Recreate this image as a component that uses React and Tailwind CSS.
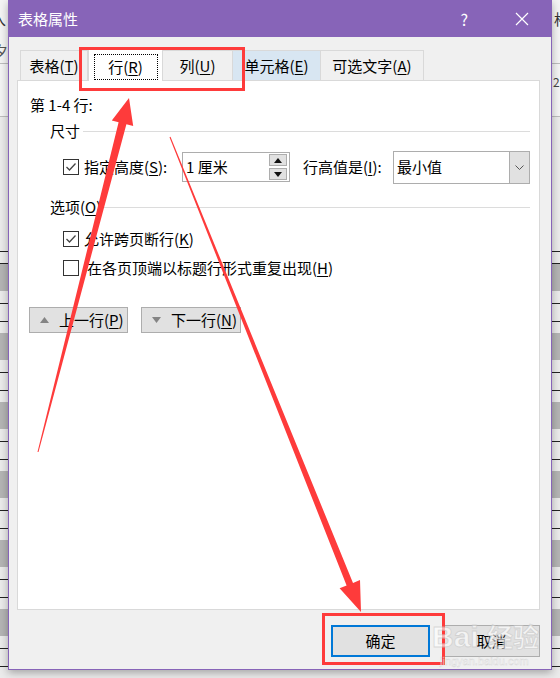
import React from 'react';

const font = "font-[family-name:'Noto_Sans_CJK_SC','Noto_Sans',sans-serif]";

function Stripes({ top }) {
  // fragments of the Word document behind the dialog
  const blocks = [0, 1, 2, 3, 4, 5];
  return (
    <div className="flex flex-col w-[8px] h-[678px] overflow-hidden bg-[#ececec]">
      <div className="h-[37px] bg-[#f4f4f4] overflow-hidden text-[15px] leading-[37px] text-[#333]">
        <span className={top === 'left' ? '-ml-[9px] inline-block' : 'ml-[2px] inline-block'}>{top === 'left' ? '入' : '格'}</span>
      </div>
      <div className="h-[33px] bg-[#f4f4f4] border-b border-[#bdbdbd] overflow-hidden text-[15px] leading-[33px] text-[#555]">
        {top === 'left' && <span className="-ml-[7px] inline-block">夕</span>}
      </div>
      <div className="h-[58px] bg-[#f4f4f4] border-b border-[#bdbdbd] overflow-hidden text-[12px] leading-[36px] text-[#444]">
        <span className={top === 'left' ? '-ml-[5px] inline-block' : 'ml-[1px] inline-block'}>{top === 'left' ? 'ı' : '2|'}</span>
      </div>
      <div className="h-[147px] bg-[#ebebeb] border-b border-[#222]" />
      <div className="h-[13px] bg-[#ebebeb] border-b border-[#222]" />
      {blocks.map((b) => (
        <div key={b} className="flex flex-col shrink-0">
          <div className="h-[27px] bg-[#b4b4b4]" />
          <div className="h-[12px] bg-[#ebebeb] border-b border-[#222] box-content" />
          <div className="h-[17px] bg-[#ebebeb] border-b border-[#222] box-content" />
          <div className="h-[11px] bg-[#ebebeb]" />
        </div>
      ))}
    </div>
  );
}

function Check({ checked }) {
  return (
    <span className="w-[16px] h-[16px] border border-[#333] bg-white flex items-center justify-center shrink-0">
      {checked && (
        <svg width="12" height="10" viewBox="0 0 12 10">
          <polyline points="1.5,5 4.5,8 10.5,1.5" fill="none" stroke="#444" strokeWidth="1.3" />
        </svg>
      )}
    </span>
  );
}

function Tab({ label, mn, w, active, hover, first }) {
  if (active) {
    return (
      <div className={`${w} h-[33px] -mb-px bg-white border-x border-t border-[#d9d9d9] flex items-center justify-center relative z-10`}>
        <div className="w-[64px] h-[26px] mt-[3px] border border-dotted border-black flex items-center justify-center">
          <span>{label}(<u className="underline-offset-2">{mn}</u>)</span>
        </div>
      </div>
    );
  }
  return (
    <div className={`${w} h-[30px] border-t border-r ${first ? 'border-l' : ''} border-[#d9d9d9] ${hover ? 'bg-[#d8e6f2]' : 'bg-[#f0f0f0]'} flex items-center justify-center`}>
      <span>{label}(<u className="underline-offset-2">{mn}</u>)</span>
    </div>
  );
}

function NavButton({ label, mn, up, w }) {
  return (
    <button className={`${w} h-[26px] bg-[#e1e1e1] border border-[#adadad] flex items-center pl-[10px] gap-[10px] text-[15px]`}>
      <svg width="9" height="6" viewBox="0 0 9 6">
        {up ? <polygon points="4.5,0 9,6 0,6" fill="#848484" /> : <polygon points="0,0 9,0 4.5,6" fill="#848484" />}
      </svg>
      <span>{label}(<u className="underline-offset-2">{mn}</u>)</span>
    </button>
  );
}

export default function App() {
  return (
    <div className={`relative w-[560px] h-[678px] overflow-hidden bg-[#ececec] ${font} text-[15px] text-black`}>
      <div className="flex">
        <Stripes top="left" />

        {/* dialog */}
        <div className="w-[544px] h-[670px] flex flex-col border-x border-b border-[#8764b8] bg-[#f0f0f0] shadow-[0_3px_8px_rgba(0,0,0,0.3)] relative z-10">
          <div className="h-[37px] bg-[#8764b8] flex items-center text-white pl-[9px] shrink-0">
            <span className="text-[15px] leading-none">表格属性</span>
            <span className="ml-auto mr-[47px] text-[16px] leading-none">?</span>
            <svg className="mr-[22px]" width="14" height="14" viewBox="0 0 14 14">
              <path d="M1 1 L13 13 M13 1 L1 13" stroke="white" strokeWidth="1.2" />
            </svg>
          </div>

          <div className="flex flex-col px-[8px] pt-[11px] pr-[11px]">
            {/* tabs */}
            <div className="flex items-end ml-[3px] leading-none">
              <Tab label="表格" mn="T" w="w-[68px]" first />
              <Tab label="行" mn="R" w="w-[75px]" active />
              <Tab label="列" mn="U" w="w-[70px]" />
              <Tab label="单元格" mn="E" w="w-[88px]" hover />
              <Tab label="可选文字" mn="A" w="w-[103px]" />
            </div>

            {/* panel */}
            <div className="h-[530px] bg-white border border-[#d9d9d9] flex flex-col pl-[12px] pr-[9px] pt-[14px] leading-[20px]">
              <div>第 1-4 行:</div>

              <div className="flex items-center ml-[20px] mt-[6px] h-[20px]">
                <span>尺寸</span>
                <div className="flex-1 h-px bg-[#dcdcdc] ml-[3px]" />
              </div>

              <div className="flex items-center mt-[10px] ml-[33px] h-[32px]">
                <div className="w-[119px] flex items-center gap-[5px]">
                  <Check checked />
                  <span>指定高度(<u className="underline-offset-2">S</u>):</span>
                </div>
                <div className="w-[108px] h-[30px] border border-[#adadad] bg-white flex items-center pl-[3px] pr-[2px]">
                  <span className="flex-1">1 厘米</span>
                  <div className="flex flex-col gap-[2px]">
                    <div className="w-[18px] h-[12px] bg-[#e1e1e1] border border-[#adadad] flex items-center justify-center">
                      <svg width="8" height="5" viewBox="0 0 8 5"><polygon points="4,0 8,5 0,5" fill="#111" /></svg>
                    </div>
                    <div className="w-[18px] h-[12px] bg-[#e1e1e1] border border-[#adadad] flex items-center justify-center">
                      <svg width="8" height="5" viewBox="0 0 8 5"><polygon points="0,0 8,0 4,5" fill="#111" /></svg>
                    </div>
                  </div>
                </div>
                <span className="ml-[13px] w-[90px]">行高值是(<u className="underline-offset-2">I</u>):</span>
                <div className="w-[137px] h-[33px] border border-[#adadad] bg-white flex items-stretch">
                  <span className="flex-1 flex items-center pl-[3px]">最小值</span>
                  <div className="w-[20px] bg-[#e1e1e1] border-l border-[#adadad] flex items-center justify-center">
                    <svg width="9" height="5" viewBox="0 0 9 5"><polyline points="0.5,0.5 4.5,4.5 8.5,0.5" fill="none" stroke="#555" strokeWidth="1" /></svg>
                  </div>
                </div>
              </div>

              <div className="flex items-center ml-[20px] mt-[14px] h-[20px]">
                <span>选项(<u className="underline-offset-2">O</u>)</span>
                <div className="flex-1 h-px bg-[#dcdcdc] ml-[2px]" />
              </div>

              <div className="flex items-center ml-[33px] mt-[12px] gap-[5px] h-[20px]">
                <Check checked />
                <span>允许跨页断行(<u className="underline-offset-2">K</u>)</span>
              </div>

              <div className="flex items-center ml-[33px] mt-[9px] gap-[8px] h-[20px]">
                <Check />
                <span>在各页顶端以标题行形式重复出现(<u className="underline-offset-2">H</u>)</span>
              </div>

              <div className="flex items-center -ml-px mt-[29px] gap-[13px]">
                <NavButton label="上一行" mn="P" up w="w-[99px]" />
                <NavButton label="下一行" mn="N" w="w-[100px]" />
              </div>
            </div>

            {/* footer buttons */}
            <div className="flex justify-end gap-[13px] pt-[15px] pb-[12px]">
              <button className="w-[99px] h-[32px] bg-[#e1e1e1] border-2 border-[#0078d7] text-[15px]">确定</button>
              <button className="w-[97px] h-[32px] bg-[#e1e1e1] border border-[#adadad] text-[15px]">取消</button>
            </div>
          </div>
        </div>

        <Stripes top="right" />
      </div>

      {/* red annotations drawn over the screenshot */}
      <svg className="absolute inset-0 pointer-events-none z-20" width="560" height="678" viewBox="0 0 560 678">
        <rect x="80.5" y="48.5" width="163" height="41" fill="none" stroke="#fe3b3b" strokeWidth="3" />
        <rect x="323.5" y="614.5" width="120" height="49" fill="none" stroke="#fe3b3b" strokeWidth="3" />
        <polygon
          points="37.5,451.9 118.6,122.2 111.8,120.5 129,98 133.2,125.9 126.4,124.2 38.5,452.1"
          fill="#fe3b3b"
        />
        <polygon
          points="170.5,136.8 353,582.9 360,580.1 361,612 339.6,588.3 346.6,585.5 169.5,137.2"
          fill="#fe3b3b"
        />
        <g opacity="0.6" fontFamily="Liberation Sans, sans-serif">
          <text x="432" y="647" fontSize="30" fontWeight="bold" fill="white" stroke="#c8c8c8" strokeWidth="0.8">Bai</text>
          <text x="487" y="647" fontSize="26" fontWeight="bold" fill="white" stroke="#c8c8c8" strokeWidth="0.8" fontFamily="Noto Sans CJK SC, sans-serif">经验</text>
          <text x="440" y="665" fontSize="11" fill="white" stroke="#c8c8c8" strokeWidth="0.4">jingyan.baidu.com</text>
        </g>
      </svg>
    </div>
  );
}
